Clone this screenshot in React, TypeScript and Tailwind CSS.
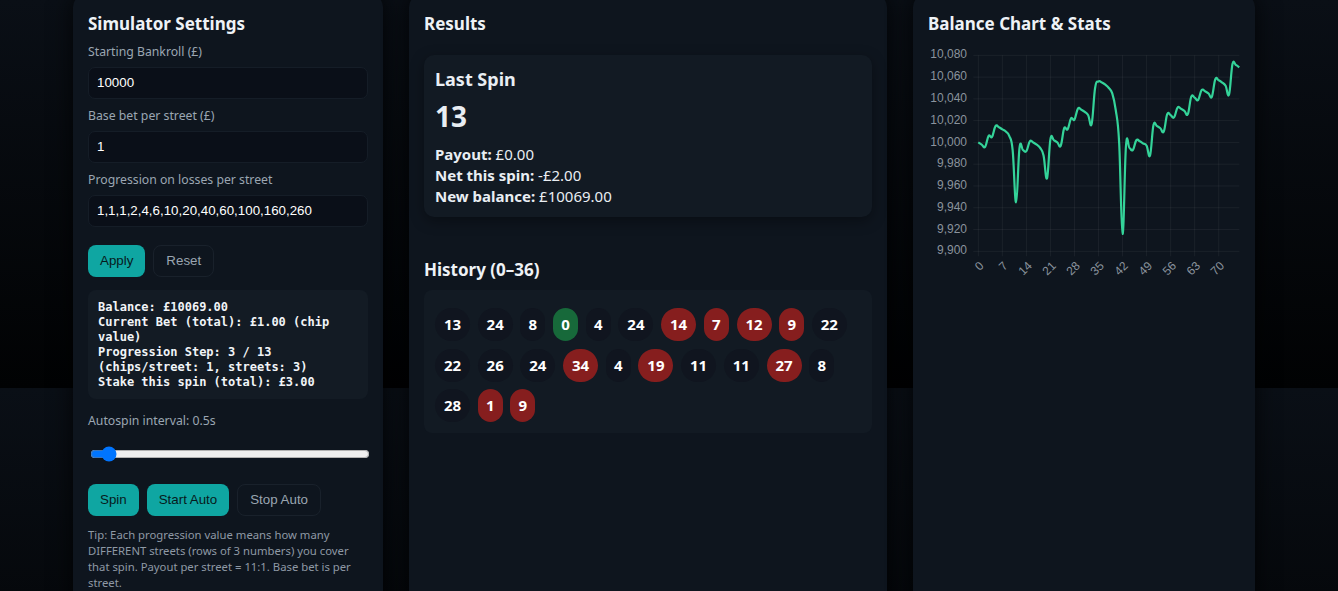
import React from "react";

const DATA = [
  10000, 9998, 9996, 10006, 10005, 10015, 10014, 10012, 10010, 10006, 9993, 9945, 9995, 9993, 9992, 10001, 10000, 9998,
  9995, 9988, 9967, 10003, 10002, 10000, 9997, 10013, 10012, 10022, 10021, 10031, 10030, 10028, 10025, 10017, 10050,
  10056, 10055, 10053, 10050, 10045, 10030, 10000, 9916, 9997, 9995, 9993, 10002, 10001, 9999, 9997, 9988, 10016,
  10015, 10013, 10010, 10026, 10025, 10023, 10032, 10031, 10029, 10026, 10042, 10041, 10039, 10048, 10047, 10045,
  10042, 10058, 10057, 10055, 10052, 10044, 10072, 10071, 10069,
];

const X0 = 50.3;
const XS = 3.435;
const Y0 = 13.3;
const YS = 1.089;
const px = (i: number) => X0 + i * XS;
const py = (v: number) => Y0 + (10080 - v) * YS;

function buildPath(): string {
  const pts = DATA.map((v, i) => [px(i), py(v)]);
  const k = 0.2;
  let d = `M${pts[0][0].toFixed(2)},${pts[0][1].toFixed(2)}`;
  for (let i = 0; i < pts.length - 1; i++) {
    const p0 = pts[Math.max(0, i - 1)];
    const p1 = pts[i];
    const p2 = pts[i + 1];
    const p3 = pts[Math.min(pts.length - 1, i + 2)];
    const c1x = p1[0] + (p2[0] - p0[0]) * k;
    const c1y = p1[1] + (p2[1] - p0[1]) * k;
    const c2x = p2[0] - (p3[0] - p1[0]) * k;
    const c2y = p2[1] - (p3[1] - p1[1]) * k;
    d += ` C${c1x.toFixed(2)},${c1y.toFixed(2)} ${c2x.toFixed(2)},${c2y.toFixed(2)} ${p2[0].toFixed(2)},${p2[1].toFixed(2)}`;
  }
  return d;
}

function Chart() {
  const yTicks = [10080, 10060, 10040, 10020, 10000, 9980, 9960, 9940, 9920, 9900];
  const xTicks = [0, 7, 14, 21, 28, 35, 42, 49, 56, 63, 70];
  const right = px(76);
  const bottom = py(9900);
  return (
    <svg width="314" height="245" className="block">
      {yTicks.map((v) => (
        <line key={"h" + v} x1={X0 - 5} x2={right} y1={py(v)} y2={py(v)} stroke="rgba(255,255,255,0.055)" strokeWidth="1" />
      ))}
      {xTicks.map((t) => (
        <line key={"v" + t} x1={px(t)} x2={px(t)} y1={py(10080)} y2={bottom + 5} stroke="rgba(255,255,255,0.055)" strokeWidth="1" />
      ))}
      {yTicks.map((v) => (
        <text
          key={"yl" + v}
          x={39}
          y={py(v)}
          textAnchor="end"
          dominantBaseline="middle"
          fontSize="12"
          fill="#8a939d"
          fontFamily="'Liberation Sans', Arial, sans-serif"
        >
          {v.toLocaleString("en-US")}
        </text>
      ))}
      {xTicks.map((t) => (
        <text
          key={"xl" + t}
          transform={`translate(${px(t) + 4},${bottom + 13}) rotate(-45)`}
          textAnchor="end"
          dominantBaseline="middle"
          fontSize="12"
          fill="#8a939d"
          fontFamily="'Liberation Sans', Arial, sans-serif"
        >
          {t}
        </text>
      ))}
      <path d={buildPath()} fill="none" stroke="#34d399" strokeWidth="2.2" strokeLinejoin="round" />
    </svg>
  );
}

type Chip = { n: number; c: "d" | "r" | "g" };
const HISTORY: Chip[] = [
  { n: 13, c: "d" }, { n: 24, c: "d" }, { n: 8, c: "d" }, { n: 0, c: "g" }, { n: 4, c: "d" }, { n: 24, c: "d" },
  { n: 14, c: "r" }, { n: 7, c: "r" }, { n: 12, c: "r" }, { n: 9, c: "r" }, { n: 22, c: "d" },
  { n: 22, c: "d" }, { n: 26, c: "d" }, { n: 24, c: "d" }, { n: 34, c: "r" }, { n: 4, c: "d" }, { n: 19, c: "r" },
  { n: 11, c: "d" }, { n: 11, c: "d" }, { n: 27, c: "r" }, { n: 8, c: "d" },
  { n: 28, c: "d" }, { n: 1, c: "r" }, { n: 9, c: "r" },
];

const chipCls = {
  d: "bg-[#10151f]",
  r: "bg-[#861e1e]",
  g: "bg-[#17693a]",
};

const sans = "font-['Noto_Sans',sans-serif]";
const formFont = "font-['Liberation_Sans',Arial,sans-serif]";

function Field({ label, value, mt }: { label: string; value: string; mt: string }) {
  return (
    <div className={mt}>
      <div className="text-[12.25px] leading-[18px] text-[#9ba6b2]">{label}</div>
      <div
        className={`mt-[6px] h-[32px] rounded-[7px] border border-[#151d27] bg-[#0a0f18] px-2 flex items-center text-[13.33px] text-white ${formFont}`}
      >
        {value}
      </div>
    </div>
  );
}

export default function App() {
  const panel =
    "rounded-[12px] bg-[#0e151e] px-[15px] pt-[17px] pb-6 shadow-[0_0_24px_rgba(0,0,0,0.75)] mt-[-5px]";
  return (
    <div
      className={`min-h-screen w-full overflow-hidden bg-[linear-gradient(180deg,#0a0f16_0%,#010203_100%)] bg-[length:100%_388px] bg-repeat-y ${sans}`}
    >
      <div className="flex gap-[26px] pl-[73px] items-stretch">
        {/* Left panel */}
        <div className={`${panel} w-[310px] shrink-0`}>
          <h2 className="mt-[1px] text-[17px] leading-[22px] font-bold text-[#eef2f6]">Simulator Settings</h2>
          <Field label="Starting Bankroll (£)" value="10000" mt="mt-[8px]" />
          <Field label="Base bet per street (£)" value="1" mt="mt-[8px]" />
          <Field label="Progression on losses per street" value="1,1,1,2,4,6,10,20,40,60,100,160,260" mt="mt-[8px]" />
          <div className={`mt-[18px] flex gap-[8px] ${formFont} text-[13.33px]`}>
            <button className="h-[32px] rounded-[8px] bg-[#0fa6a2] px-3 text-[#071a1c]">Apply</button>
            <button className="h-[32px] rounded-[8px] border border-[#19212b] bg-transparent px-3 text-[#9aa5b1]">
              Reset
            </button>
          </div>
          <div className="mt-[13px] rounded-[8px] bg-[#131b24] px-[10px] pt-[10px] pb-[9px] font-['DejaVu_Sans_Mono',monospace] text-[12px] font-bold leading-[15px] text-[#f1f4f7] whitespace-pre-wrap">
            <div>Balance: £10069.00</div>
            <div>Current Bet (total): £1.00 (chip value)</div>
            <div>Progression Step: 3 / 13 (chips/street: 1, streets: 3)</div>
            <div>Stake this spin (total): £3.00</div>
          </div>
          <div className="mt-[13px] text-[12.25px] leading-[18px] text-[#9ba6b2]">Autospin interval: 0.5s</div>
          <input
            type="range"
            min={0}
            max={12}
            step={0.1}
            defaultValue={0.5}
            className="mt-[16px] ml-[2px] block w-[280px]"
          />
          <div className={`mt-[22px] flex gap-[8px] ${formFont} text-[13.33px]`}>
            <button className="h-[32px] rounded-[8px] bg-[#0fa6a2] px-3 text-[#071a1c]">Spin</button>
            <button className="h-[32px] rounded-[8px] bg-[#0fa6a2] px-3 text-[#071a1c]">Start Auto</button>
            <button className="h-[32px] rounded-[8px] border border-[#19212b] bg-transparent px-3 text-[#9aa5b1]">
              Stop Auto
            </button>
          </div>
          <div className="mt-[11px] text-[11.3px] leading-[16px] text-[#8e99a5]">
            <div>Tip: Each progression value means how many</div>
            <div>DIFFERENT streets (rows of 3 numbers) you cover</div>
            <div>that spin. Payout per street = 11:1. Base bet is per</div>
            <div>street.</div>
          </div>
        </div>

        {/* Middle panel */}
        <div className={`${panel} w-[478px] shrink-0`}>
          <h2 className="mt-[1px] text-[17px] leading-[22px] font-bold text-[#eef2f6]">Results</h2>
          <div className="mt-[20px] rounded-[10px] bg-[#121a23] px-[11px] pt-[11px] pb-[10px] shadow-[0_4px_14px_rgba(0,0,0,0.35)] text-[#e9eef3]">
            <div className="text-[18px] leading-[26px] font-bold">Last Spin</div>
            <div className="mt-[6px] text-[28px] leading-[36px] font-bold">13</div>
            <div className="mt-[10px] text-[15px] leading-[21px]">
              <div>
                <span className="font-bold">Payout:</span> £0.00
              </div>
              <div>
                <span className="font-bold">Net this spin:</span> -£2.00
              </div>
              <div>
                <span className="font-bold">New balance:</span> £10069.00
              </div>
            </div>
          </div>
          <h2 className="mt-[42px] text-[17px] leading-[22px] font-bold text-[#eef2f6]">History (0–36)</h2>
          <div className="mt-[9px] rounded-[8px] bg-[#121a23] pl-[11px] pr-3 pt-[18px] pb-[11px] flex flex-wrap gap-x-[7.7px] gap-y-[7.5px]">
            {HISTORY.map((h, i) => (
              <div
                key={i}
                className={`h-[33px] rounded-full flex items-center justify-center text-[15px] font-bold text-white ${
                  h.n >= 10 ? "w-[35px]" : "w-[25px]"
                } ${chipCls[h.c]}`}
              >
                {h.n}
              </div>
            ))}
          </div>
        </div>

        {/* Right panel */}
        <div className={`${panel} w-[342px] shrink-0`}>
          <h2 className="mt-[1px] text-[17px] leading-[22px] font-bold text-[#eef2f6]">Balance Chart &amp; Stats</h2>
          <div className="mt-[7px]">
            <Chart />
          </div>
        </div>
      </div>
    </div>
  );
}
